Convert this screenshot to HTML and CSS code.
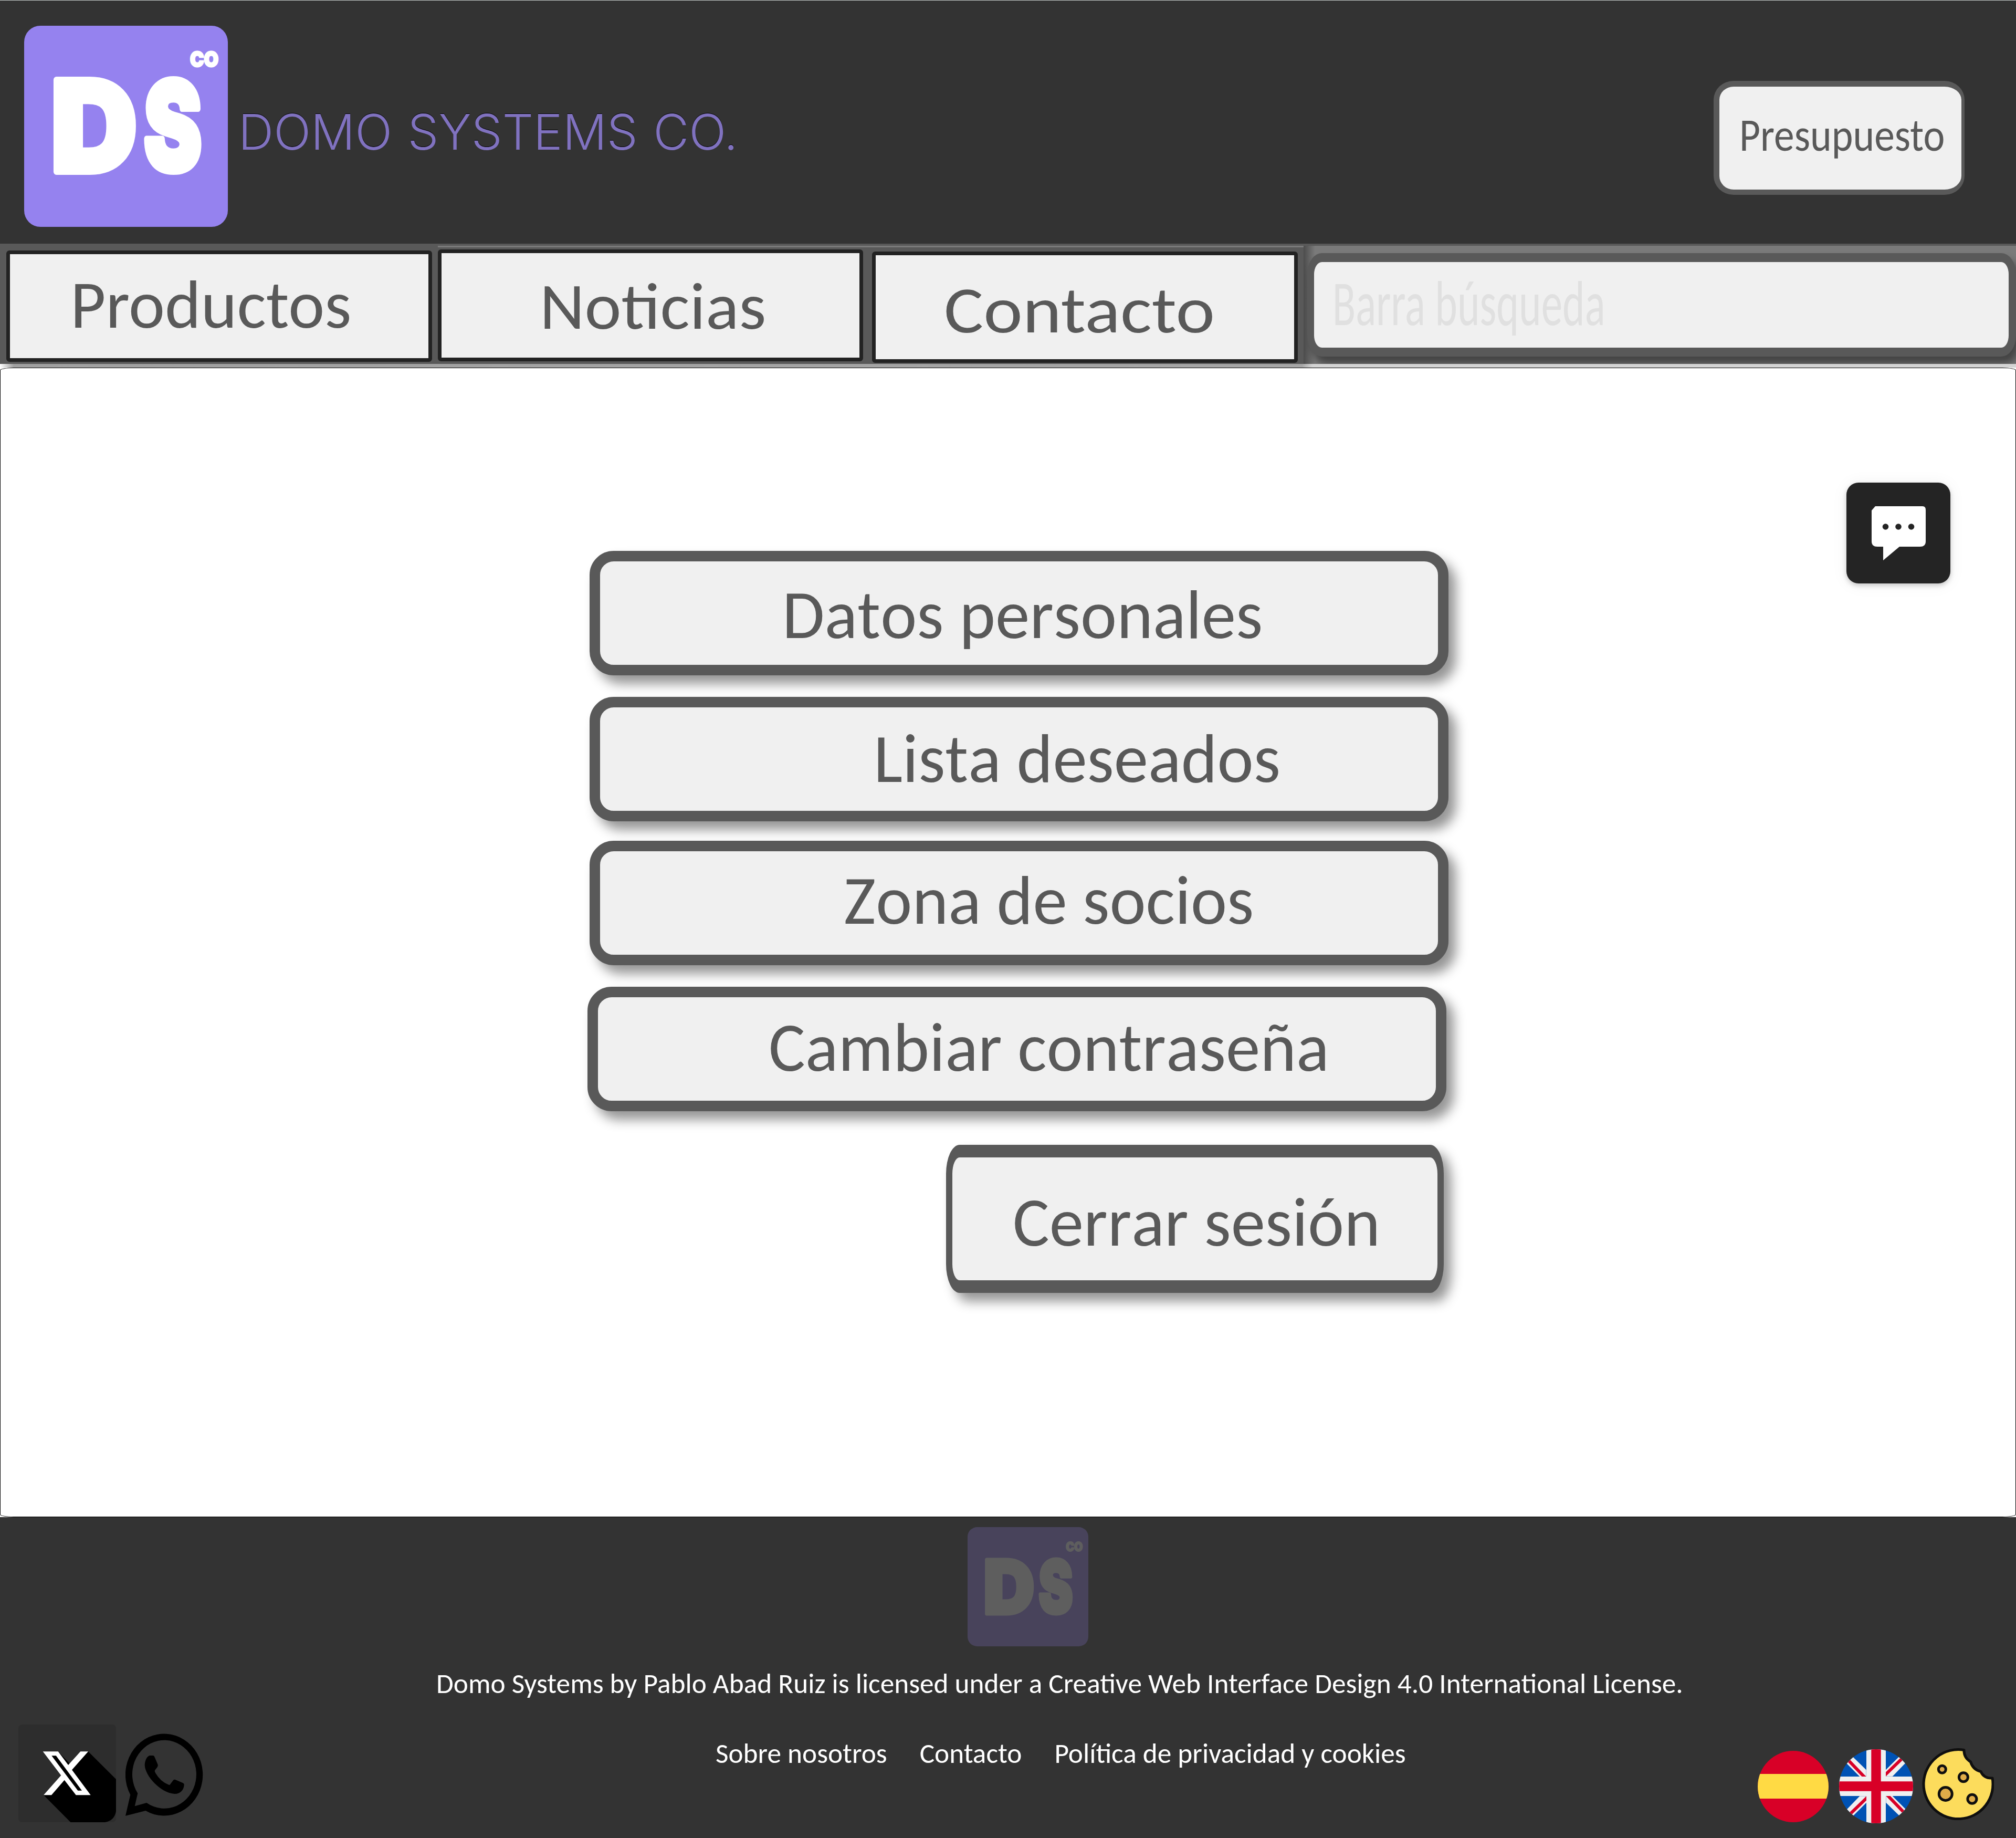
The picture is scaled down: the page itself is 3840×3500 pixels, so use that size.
FILE: index.html
```html
<!DOCTYPE html>
<html lang="es">
<head>
<meta charset="utf-8">
<title>Domo Systems Co.</title>
<link rel="stylesheet" href="styles.css">
</head>
<body>
<svg class="defs" width="0" height="0" aria-hidden="true">
  <symbol id="logo" viewBox="0 0 388 383">
    <rect width="388" height="383" rx="31" fill="#9582ef"/>
    <g fill="#fff" stroke="#fff" font-family="Inter, sans-serif" font-weight="900" stroke-linejoin="round">
      <text x="51" y="278" font-size="240" stroke-width="12" textLength="164" lengthAdjust="spacingAndGlyphs">D</text>
      <text x="228" y="276" font-size="236" stroke-width="12" textLength="110" lengthAdjust="spacingAndGlyphs">S</text>
      <text x="316" y="78" font-size="40" stroke-width="3" textLength="54" lengthAdjust="spacingAndGlyphs">CO</text>
    </g>
  </symbol>
</svg>

<header class="header">
  <a class="brand"><svg class="brand-logo"><use href="#logo"/></svg><span class="brand-name"><span class="fit fit-brand">DOMO SYSTEMS CO.</span></span></a>
  <a class="quote"><span class="fit fit-quote">Presupuesto</span></a>
</header>

<nav class="nav">
  <a class="tab tab-products"><span class="fit fit-products">Productos</span></a>
  <a class="tab tab-news"><span class="fit fit-news">Noticias</span></a>
  <a class="tab tab-contact"><span class="fit fit-contact">Contacto</span></a>
  <div class="search-zone"><div class="search"><span class="fit fit-search">Barra búsqueda</span></div></div>
</nav>
<div class="nav-edge"></div>

<main class="main">
  <div class="menu">
    <a class="option opt-data">Datos personales</a>
    <a class="option opt-wish">Lista deseados</a>
    <a class="option opt-zone">Zona de socios</a>
    <a class="option opt-pass">Cambiar contraseña</a>
    <a class="logout">Cerrar sesión</a>
  </div>
  <a class="chat">
    <svg viewBox="0 0 198 192">
      <path fill="#fff" d="M55 45H145Q151 45 151 52V112Q151 122 140 122H101L70 148V122H59Q48 122 48 112V53Z"/>
      <circle cx="74.500" cy="84" r="5.800" fill="#242424"/><circle cx="99" cy="84" r="5.800" fill="#242424"/><circle cx="123.500" cy="84" r="5.800" fill="#242424"/>
    </svg>
  </a>
</main>

<footer class="footer">
  <div class="social">
    <svg class="x" viewBox="0 0 186 186">
      <rect width="186" height="186" rx="7" fill="#2d2d2d"/>
      <path d="M133 51.300L186 104V165Q183 183 165 186H99.500L48 134.300L87.700 95ZM75.700 51.300L98.500 75L95 78Z"/>
      <path fill="#fff" d="M46.700 51.300H75.700L95 77L118.300 51.300H133L102 86.300L137.700 134.300H109.700L87.700 105.700L63 134.300H48L81.300 96.700Z"/>
      <path d="M63.300 59.300H71.700L121 125.700H113.300Z"/>
    </svg>
    <svg class="wa" viewBox="0 0 148 157">
      <path fill-rule="evenodd" d="M9.300 116.700A73.700 78 0 1 1 38.300 147L0 156.700ZM23.300 114L17.700 138.300L40.300 132A61 65 0 1 0 23.300 114Z"/>
      <path d="M36.700 60C37 50 42 42 47 42H53Q55 42.500 56 46L61.500 59Q62.500 61.500 60 65L56 70Q55 72 57 75Q66 91 82 97.500Q84 98.500 85 97L91 89Q93 87 95 88L109 94Q112 95.500 111.700 98C111 108 104 115 94 115C66 113 37 80 36.700 60Z"/>
    </svg>
  </div>
  <div class="legal">
    <svg class="footer-logo"><use href="#logo"/></svg>
    <p class="license">Domo Systems by Pablo Abad Ruiz is licensed under a Creative Web Interface Design 4.0 International License.</p>
    <div class="links"><a>Sobre nosotros</a><a>Contacto</a><a>Política de privacidad y cookies</a></div>
  </div>
  <div class="prefs">
    <svg class="es" viewBox="0 0 135 136" preserveAspectRatio="none">
      <clipPath id="ces"><ellipse cx="67.500" cy="68" rx="67.500" ry="68"/></clipPath>
      <g clip-path="url(#ces)"><rect width="135" height="136" fill="#d80027"/><rect y="44" width="135" height="47" fill="#ffda44"/></g>
    </svg>
    <svg class="uk" viewBox="0 0 141 141">
      <clipPath id="cuk"><circle cx="70.500" cy="70.500" r="70.500"/></clipPath>
      <g clip-path="url(#cuk)">
        <rect width="141" height="141" fill="#0052b4"/>
        <g id="q"><path fill="#f0f0f0" d="M10 -1.300L51.700 39.300V52H39.300L0 12.500V0Z"/><path fill="#d80027" d="M6 4.500L51.700 52H43.400L0 7Z"/></g>
        <use href="#q" transform="rotate(90 70.500 70.500)"/><use href="#q" transform="rotate(180 70.500 70.500)"/><use href="#q" transform="rotate(270 70.500 70.500)"/>
        <path fill="#f0f0f0" d="M52 0H89V52H141V89H89V141H52V89H0V52H52Z"/>
        <path fill="#d80027" d="M61.300 0H79.700V61.300H141V79.700H79.700V141H61.300V79.700H0V61.300H61.300Z"/>
      </g>
    </svg>
    <svg class="cookie" viewBox="0 0 138 138">
      <g fill="#e0ac48" stroke="#0f0f0f" stroke-width="5">
        <path fill="#fcdc5c" stroke-linejoin="round" d="M81 3.500A66 66 0 1 0 135 57Q119 58 113 44.500Q98 41 93.500 26Q80.500 18 81 3.500Z"/>
        <circle cx="39.300" cy="40.300" r="7"/><circle cx="79.900" cy="55.300" r="8.500"/><circle cx="45.800" cy="87" r="12.500"/><circle cx="96.400" cy="96.700" r="8.500"/>
      </g>
    </svg>
  </div>
</footer>
</body>
</html>
```
FILE: styles.css
```css
* { box-sizing: border-box; }
body {
  margin: 0;
  width: 3840px;
  height: 3500px;
  overflow: hidden;
  background: #fff;
  color: #595959;
  font-family: Carlito, Calibri, "Open Sans", sans-serif;
}
.defs { display: none; }
svg { display: block; flex: none; }
.fit { display: block; line-height: 1; white-space: nowrap; transform-origin: 0 0; }

.header {
  height: 464px;
  background: #333;
  border-top: 1px solid #c9d1ce;
  display: flex;
  justify-content: space-between;
  align-items: flex-start;
}
.brand { display: flex; padding: 48px 0 0 46px; }
.brand-logo { width: 388px; height: 383px; }
.brand-name {
  padding: 155px 0 0 20px;
  color: #8072bf;
  font-family: Inter, sans-serif;
  font-weight: 300;
  font-size: 94px;
  word-spacing: 3px;
  text-shadow: 0 -1px 0 #000;
}
.fit-brand { transform: scaleX(.994); }
.quote {
  width: 478px;
  height: 217px;
  margin: 153px 98px 0 0;
  padding: 48px 0 0 38px;
  background: #f0f0f0;
  border: solid #595959;
  border-width: 11px 6px 10px 11px;
  border-radius: 38px / 36px;
  font-size: 88px;
}
.fit-quote { transform: scaleX(.881); }

.nav {
  height: 229px;
  padding-left: 12px;
  display: flex;
  align-items: flex-start;
  background: linear-gradient(#7a7a7a, #7a7a7a) 834px 4px / 3006px 3px no-repeat #595959;
}
.tab {
  flex: none;
  width: 811px;
  height: 212px;
  background: #f0f0f0;
  border: 7px solid #222;
  border-radius: 6px;
  font-size: 129px;
}
.tab-products { margin-top: 13px; padding: 32px 0 0 115px; }
.tab-news { width: 810px; margin: 11px 0 0 11px; height: 213px; padding: 39px 0 0 187px; font-size: 125px; }
.tab-contact { margin: 15px 0 0 17px; padding: 41px 0 0 130px; font-size: 126px; }
.fit-products { transform: scaleX(1.014); }
.fit-news { transform: scaleX(1.061); }
.fit-contact { transform: scaleX(1.121); }
.search-zone {
  flex: 1;
  height: 225px;
  margin: 4px 0 0 11px;
  padding: 14px 0 0 7px;
  background: linear-gradient(90deg, #4c4c4c, #7a7a7a00 22px) #7a7a7a;
  overflow: hidden;
}
.search {
  height: 197px;
  padding: 18px 0 0 35px;
  background: #f0f0f0;
  border: solid #595959;
  border-width: 17px 14px 17px 13px;
  border-radius: 28px / 40px;
  box-shadow: 8px 14px 16px rgba(0, 0, 0, .45);
  color: #e0e0e0;
  font-size: 121px;
}
.fit-search { transform: scaleX(.671); }
.nav-edge {
  height: 7px;
  background: linear-gradient(90deg, #fff, #a0a0a0 26px, #a6a6a6 2480px, #d4d4d4 2500px, #d4d4d4);
}

.main {
  position: relative;
  height: 2189px;
  border: 1px solid #000;
  border-radius: 26px / 5px;
  background: #fff;
}
.menu { display: flex; flex-direction: column; padding: 348px 0 0 1118px; }
.option, .logout {
  line-height: 1;
  font-size: 131px;
  font-kerning: none;
  white-space: nowrap;
  background: #f0f0f0;
  border: 20px solid #595959;
  box-shadow: 14px 16px 22px rgba(0, 0, 0, .42);
}
.option { width: 1636px; height: 237px; margin: 0 0 41px 4px; border-radius: 46px; }
.opt-data { padding: 36px 0 0 347px; }
.opt-wish { padding: 32px 0 0 521px; margin-bottom: 37px; }
.opt-zone { padding: 28px 0 0 464px; }
.opt-pass { padding: 30px 0 0 325px; margin-left: 0; margin-bottom: 64px; }
.logout {
  width: 948px;
  height: 282px;
  margin-left: 683px;
  padding: 58px 0 0 115px;
  border-width: 24px 12px;
  border-radius: 26px / 55px;
}
.chat {
  position: absolute;
  left: 3516px;
  top: 218px;
  width: 198px;
  height: 192px;
  background: #242424;
  border-radius: 23px;
  box-shadow: 0 4px 10px rgba(0, 0, 0, .2), 0 2px 32px rgba(0, 0, 0, .06);
}

.footer {
  height: 611px;
  background: #333;
  color: #fff;
  display: grid;
  grid-template-columns: 800px 2548px 1fr;
}
.social { display: flex; align-items: flex-start; padding: 395px 0 0 35px; gap: 18px; }
.x { width: 186px; height: 186px; }
.wa { width: 148px; height: 157px; margin-top: 17px; }
.legal { padding-left: 31px; font-size: 53.3px; line-height: 54px; white-space: nowrap; }
.footer-logo { width: 230px; height: 229px; margin: 18px 0 0 1012px; opacity: .21; }
.license { margin: 43px 0 0; }
.links { display: flex; gap: 62px; margin: 79px 0 0 532px; }
.prefs { display: flex; align-items: flex-start; padding-top: 440px; }
.es { width: 135px; height: 136px; margin-top: 5px; }
.uk { width: 141px; height: 141px; margin: 2px 0 0 20px; }
.cookie { width: 138px; height: 138px; margin-left: 16px; }
```
